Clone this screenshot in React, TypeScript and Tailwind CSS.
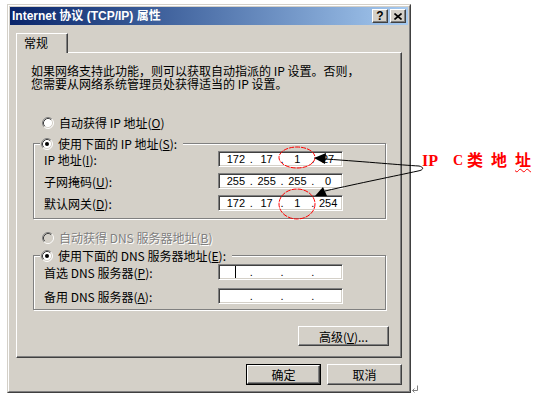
import { Fragment, type ReactNode } from 'react'

const raised =
  'border border-t-white border-l-white border-b-[#404040] border-r-[#404040] shadow-[inset_-1px_-1px_0_#808080]'
const sunken =
  'border border-t-[#808080] border-l-[#808080] border-b-white border-r-white shadow-[inset_1px_1px_0_#404040,inset_-1px_-1px_0_#d4d0c8] bg-white'
const etched = 'border border-[#808080] shadow-[inset_1px_1px_0_#fff,1px_1px_0_#fff]'

function Radio({ checked = false, disabled = false }: { checked?: boolean; disabled?: boolean }) {
  return (
    <svg width="12" height="12" viewBox="0 0 12 12" className="shrink-0">
      <circle cx="6" cy="6" r="5" fill={disabled ? '#d4d0c8' : '#fff'} />
      <path d="M2.11 9.89A5.5 5.5 0 0 1 9.89 2.11" stroke="#808080" fill="none" />
      <path d="M2.82 9.18A4.5 4.5 0 0 1 9.18 2.82" stroke="#404040" fill="none" />
      <path d="M9.89 2.11A5.5 5.5 0 0 1 2.11 9.89" stroke="#fff" fill="none" />
      <path d="M9.18 2.82A4.5 4.5 0 0 1 2.82 9.18" stroke="#d4d0c8" fill="none" />
      {checked && <circle cx="6" cy="6" r="2" fill="#000" />}
    </svg>
  )
}

function IpBox({ parts = ['', '', '', ''], caret = false }: { parts?: string[]; caret?: boolean }) {
  return (
    <div
      className={`${sunken} w-[125px] h-[16px] shrink-0 flex items-center pl-[3px] font-['Liberation_Sans',sans-serif] text-[11px] leading-none text-black`}
    >
      {parts.map((p, i) => (
        <Fragment key={i}>
          {i > 0 && <span className="w-[3px] flex justify-center">.</span>}
          <span className="w-[28px] flex justify-center items-center">
            {caret && i === 0 ? <span className="w-px h-[12px] bg-black" /> : p}
          </span>
        </Fragment>
      ))}
    </div>
  )
}

function Row({ label, children }: { label: ReactNode; children: ReactNode }) {
  return (
    <div className="flex items-center">
      <div className="w-[174px] shrink-0">{label}</div>
      {children}
    </div>
  )
}

function Legend({ children }: { children: ReactNode }) {
  return (
    <div className="-mt-[7px] ml-[6px] w-fit h-[13px] pl-[1px] pr-[6px] bg-[#d4d0c8] flex items-center gap-[5px]">
      <Radio checked />
      <span>{children}</span>
    </div>
  )
}

function CapBtn({ children }: { children: ReactNode }) {
  return (
    <div className={`${raised} w-[16px] h-[14px] bg-[#d4d0c8] flex items-center justify-center`}>{children}</div>
  )
}

export default function App() {
  return (
    <div className="relative w-[538px] h-[399px] bg-white overflow-hidden flex items-start font-['Noto_Sans_CJK_SC',sans-serif] text-[12px] leading-[13px] text-black">
      {/* Dialog */}
      <div className="ml-[7px] mt-[4px] w-[404px] h-[389px] shrink-0 bg-[#d4d0c8] border border-t-[#d4d0c8] border-l-[#d4d0c8] border-b-[#404040] border-r-[#404040]">
        <div className="h-full border border-t-white border-l-white border-b-[#808080] border-r-[#808080] p-[1px] flex flex-col">
          {/* Title bar */}
          <div className="h-[18px] shrink-0 flex items-center justify-between px-[2px] bg-linear-to-r from-[#0a246a] to-[#a6caf0]">
            <span className="font-['Liberation_Sans','Noto_Sans_CJK_SC',sans-serif] font-bold text-[12px] leading-none text-white">
              Internet 协议 (TCP/IP) 属性
            </span>
            <div className="flex gap-[2px]">
              <CapBtn>
                <span className="font-['Liberation_Sans',sans-serif] font-bold text-[12px] leading-none">?</span>
              </CapBtn>
              <CapBtn>
                <svg width="8" height="7" viewBox="0 0 8 7">
                  <path d="M0.5 0.5L7.5 6.5M7.5 0.5L0.5 6.5" stroke="#000" strokeWidth="1.6" />
                </svg>
              </CapBtn>
            </div>
          </div>

          {/* Tab + panel */}
          <div className="mt-[8px] mx-[6px] flex flex-col">
            <div className="relative z-10 w-[52px] h-[20px] bg-[#d4d0c8] border-t border-l border-r border-t-white border-l-white border-r-[#404040] shadow-[inset_-1px_0_0_#808080] pl-[7px] pt-[2px]">
              常规
            </div>
            <div className={`-mt-px h-[306px] ${raised} flex flex-col`}>
              <div className="pl-[14px] pt-[11px] leading-[13px]">
                <p className="h-[13px]">如果网络支持此功能，则可以获取自动指派的 IP 设置。否则，</p>
                <p className="h-[13px]">您需要从网络系统管理员处获得适当的 IP 设置。</p>
              </div>

              <div className="mt-[26px] pl-[25px] h-[13px] flex items-center gap-[5px]">
                <Radio />
                <span>
                  自动获得 IP 地址(<u>O</u>)
                </span>
              </div>

              {/* IP group */}
              <div className={`mt-[14px] ml-[16px] w-[353px] pb-[7px] ${etched}`}>
                <Legend>
                  使用下面的 IP 地址(<u>S</u>):
                </Legend>
                <div className="mt-[1px] pl-[10px] flex flex-col gap-[6px]">
                  <Row label={<>IP 地址(<u>I</u>):</>}>
                    <IpBox parts={['172', '17', '1', '27']} />
                  </Row>
                  <Row label={<>子网掩码(<u>U</u>):</>}>
                    <IpBox parts={['255', '255', '255', '0']} />
                  </Row>
                  <Row label={<>默认网关(<u>D</u>):</>}>
                    <IpBox parts={['172', '17', '1', '254']} />
                  </Row>
                </div>
              </div>

              <div className="mt-[12px] pl-[25px] h-[13px] flex items-center gap-[5px] text-[#808080] [text-shadow:1px_1px_0_#fff]">
                <Radio disabled />
                <span>
                  自动获得 DNS 服务器地址(<u>B</u>)
                </span>
              </div>

              {/* DNS group */}
              <div className={`mt-[11px] ml-[16px] w-[353px] pb-[5px] ${etched}`}>
                <Legend>
                  使用下面的 DNS 服务器地址(<u>E</u>):
                </Legend>
                <div className="mt-[2px] pl-[10px] flex flex-col gap-[8px]">
                  <Row label={<>首选 DNS 服务器(<u>P</u>):</>}>
                    <IpBox caret />
                  </Row>
                  <Row label={<>备用 DNS 服务器(<u>A</u>):</>}>
                    <IpBox />
                  </Row>
                </div>
              </div>

              <div className="mt-[16px] pr-[12px] flex justify-end">
                <div className={`${raised} w-[91px] h-[20px] flex items-center justify-center`}>
                  高级(<u>V</u>)...
                </div>
              </div>
            </div>
          </div>

          {/* OK / Cancel */}
          <div className="mt-[6px] pr-[6px] flex justify-end gap-[6px]">
            <div className="w-[75px] h-[21px] border border-black">
              <div className={`h-full ${raised} flex items-center justify-center`}>确定</div>
            </div>
            <div className={`w-[75px] h-[21px] ${raised} flex items-center justify-center`}>取消</div>
          </div>
        </div>
      </div>

      {/* Red annotation label */}
      <div className="ml-[11px] mt-[153px] flex items-end whitespace-nowrap font-['Liberation_Serif','Noto_Sans_CJK_SC',serif] font-bold text-[16px] leading-[16px] text-[#ff0000]">
        <span className="w-[31px]">IP</span>
        <span className="w-[14px] text-[14px]">C</span>
        <span className="w-[24px]">类</span>
        <span className="w-[24px]">地</span>
        <span className="underline decoration-wavy decoration-[#ff0000] decoration-1 underline-offset-2">址</span>
      </div>

      {/* Annotation overlay: circles, arrows, paragraph mark */}
      <svg className="absolute left-0 top-0 pointer-events-none" width="538" height="399" viewBox="0 0 538 399">
        <ellipse cx="297" cy="157.5" rx="18" ry="10.5" fill="none" stroke="#ff0000" strokeDasharray="5 1" />
        <ellipse cx="297" cy="204" rx="18" ry="15" fill="none" stroke="#ff0000" strokeDasharray="5 1" />
        <path d="M419 166C400 165 370 162 325 159" fill="none" stroke="#000" />
        <polygon points="314,158 326,153 325,164" fill="#000" />
        <path d="M419 166C424 167 424 170 418 171C395 176 360 183 325 191" fill="none" stroke="#000" />
        <polygon points="315,196 327,196 323,187" fill="#000" />
        <path d="M417.5 385.5V390.5H412.5M414.5 388.5L412.5 390.5L414.5 392.5" fill="none" stroke="#808080" />
      </svg>
    </div>
  )
}
